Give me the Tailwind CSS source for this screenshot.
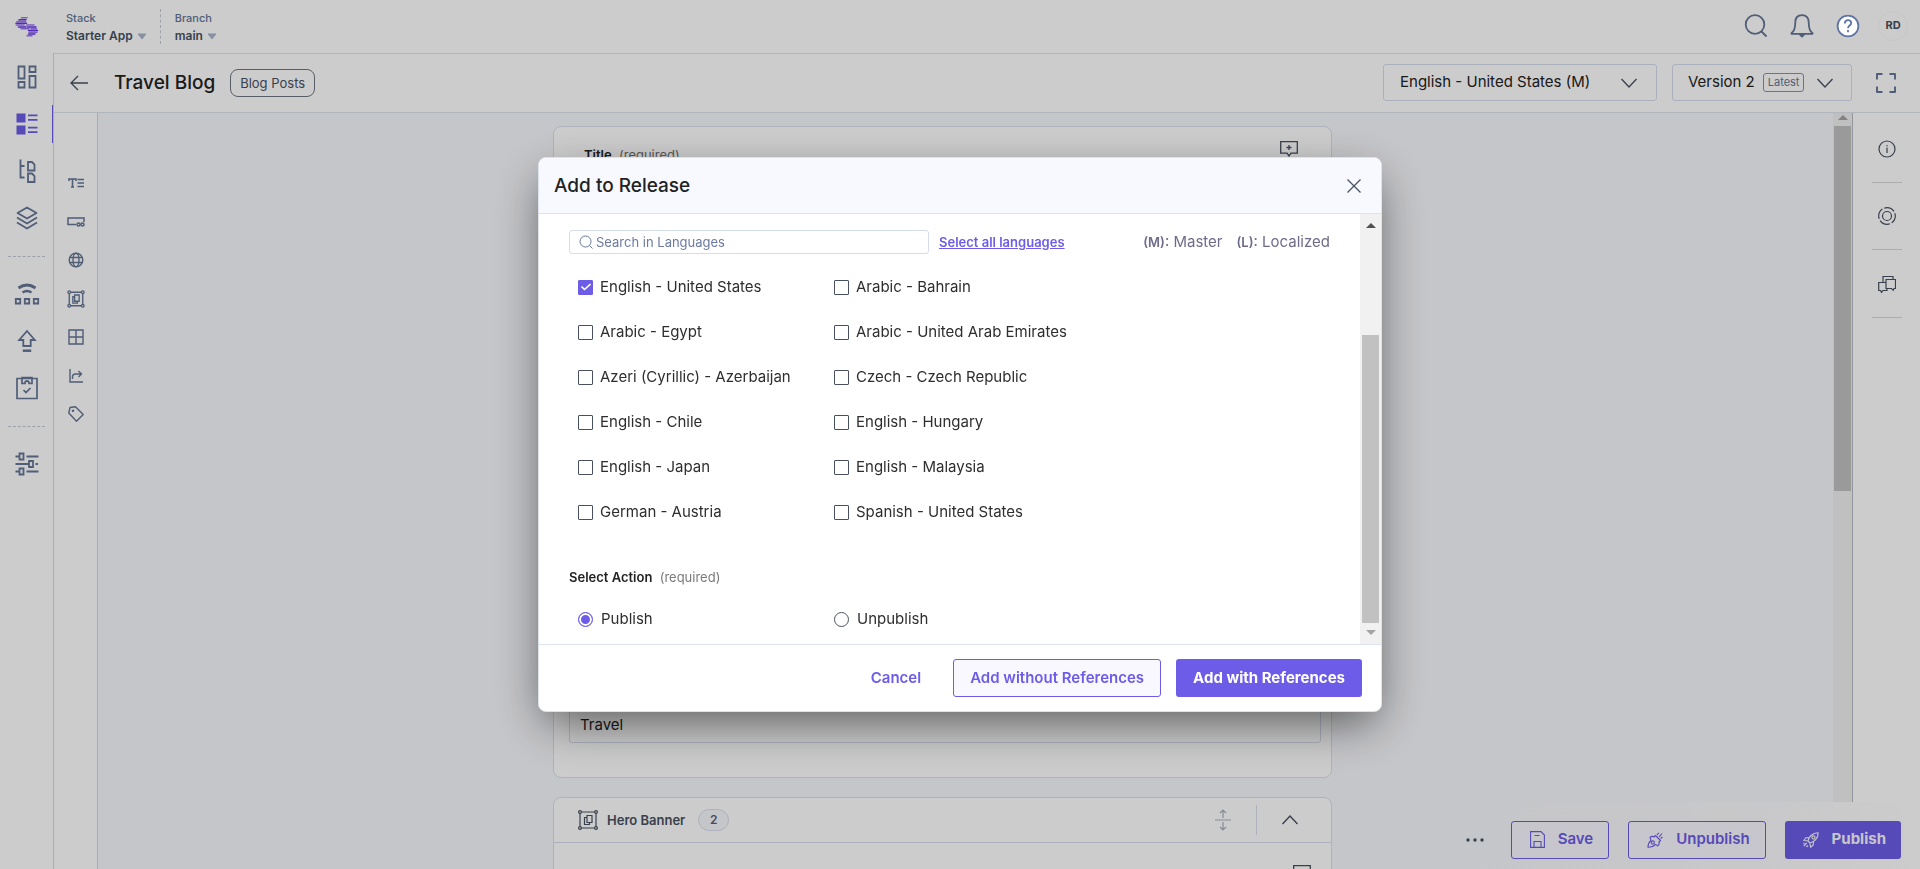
<!DOCTYPE html>
<html lang="en">
<head>
<meta charset="utf-8">
<title>Travel Blog</title>
<script src="https://cdn.jsdelivr.net/npm/@tailwindcss/browser@4"></script>
</head>
<body class="h-screen overflow-hidden bg-white font-['Inter',sans-serif] text-[#222222]">
<div class="flex h-full">

  <!-- Primary navigation -->
  <nav aria-label="Main" class="flex w-[53px] shrink-0 flex-col items-center text-[#647696]">
    <a href="#" aria-label="Home" class="flex h-[53px] w-full items-center justify-center">
      <svg width="24" height="20" viewBox="0 0 24 20" fill="none" stroke-width="1.500" stroke-linecap="round"><path stroke="#9a78f0" d="M6.500.8h5.500M2 4.500h8.500M1.200 8h8M11.500 8h7.500M6 11.700h8M16 11.700h5.500M14 15.300h8M12 18.800h5"/><path stroke="#6a35e8" d="M4 2.700h7M1 6.200h10.500M3.500 9.900h7.500M12.500 9.900h8.500M13.500 13.500h9M13.500 17h6.500"/></svg>
    </a>
    <ul class="flex w-full flex-col">
      <li><a href="#" aria-label="Dashboard" class="flex h-[47px] items-center justify-center"><svg width="22" height="24" viewBox="0 0 22 24" fill="none" stroke="currentColor" stroke-width="1.8"><path d="M2.500 1.500h6v12h-6zM13.500 1.500h6v5.500h-6zM2.500 17h6v5.500h-6zM13.500 11h6v11.500h-6z"/></svg></a></li>
      <li><a href="#" aria-label="Entries" aria-current="page" class="relative flex h-[47px] items-center justify-center text-[#6c5ce7]"><svg width="22" height="22" viewBox="0 0 22 22" fill="currentColor"><path d="M.5 0.500h9v9h-9zM.5 12.500h9v9h-9zM12 1.500h9.500v1.800H12zM12 6h9.500v1.800H12zM12 13.800h9.500v1.800H12zM12 18.200h9.500V20H12z"/></svg><span class="absolute right-0 h-[38px] w-px bg-[#6c5ce7]"></span></a></li>
      <li><a href="#" aria-label="Content models" class="flex h-[47px] items-center justify-center"><svg width="20" height="24" viewBox="0 0 20 24" fill="none" stroke="currentColor" stroke-width="1.800"><path d="M3.500 .5V18.500h4M3.500 7h4M11 3h4l2.500 2.500v6H11zM11 14.500h4l2.500 2.500v6H11z"/></svg></a></li>
      <li><a href="#" aria-label="Assets" class="flex h-[47px] items-center justify-center"><svg width="22" height="24" viewBox="0 0 22 24" fill="none" stroke="currentColor" stroke-width="1.800" stroke-linejoin="round"><path d="M11 1.500l9.500 5.500L11 12.500 1.500 7zM1 11.500l10 6 10-6M1 16.500l10 6 10-6"/></svg></a></li>
    </ul>
    <div class="mt-[15px] mb-[13px] w-[37px] border-t border-dashed border-[#c5cad6]"></div>
    <ul class="flex w-full flex-col">
      <li><a href="#" aria-label="Automations" class="flex h-[47px] items-center justify-center"><svg width="26" height="24" viewBox="0 0 26 24" fill="none" stroke="currentColor"><path stroke-width="3" d="M4.500 6q8.500-6 17 0"/><path stroke-width="2.500" d="M8.500 10.500q4.500-3 9 0"/><path stroke-width="1.800" d="M1.800 17h4.400v4.500H1.800zM10.800 17h4.400v4.500h-4.400zM19.800 17h4.400v4.500h-4.400z"/></svg></a></li>
      <li><a href="#" aria-label="Publish queue" class="flex h-[47px] items-center justify-center"><svg width="22" height="24" viewBox="0 0 22 24" fill="none" stroke="currentColor" stroke-width="1.800"><path d="M11 2L3.200 11H7.300v6h7.400v-6h4.100z"/><path stroke-width="2.500" d="M6.800 21.700h8.400"/></svg></a></li>
      <li><a href="#" aria-label="Releases" class="flex h-[47px] items-center justify-center"><svg width="22" height="24" viewBox="0 0 22 24" fill="none" stroke="currentColor" stroke-width="1.700"><path d="M1 2.500h20v20H1zM6 1.500v6h3V6q2-2 4 0v1.500h3v-6zM7.500 14l2.500 2.500 4.500-4.500"/></svg></a></li>
    </ul>
    <div class="my-[15px] w-[37px] border-t border-dashed border-[#c5cad6]"></div>
    <a href="#" aria-label="Settings" class="flex h-[44px] w-full items-center justify-center"><svg width="24" height="24" viewBox="0 0 24 24" fill="none" stroke="currentColor" stroke-width="1.800"><path d="M.5 4.500H4M4.500 1.500h4v6h-4zM11.500 4.500h12M.5 12h13M14 9h4v6h-4zM20.500 12h2.500M.5 19.500H4M4.500 16.500h4v6h-4zM11.500 19.500h12"/></svg></a>
  </nav>

  <div class="flex min-w-0 grow flex-col">
    <!-- Top bar -->
    <header class="flex h-[53px] shrink-0 items-center pr-3 pl-[13px]">
      <div class="pt-[2px]">
        <div class="text-[11px] leading-4 font-medium text-[#647696]">Stack</div>
        <button class="flex items-center gap-[5px] text-[12px] leading-5 font-semibold text-[#475161]">Starter App <svg width="8" height="6" viewBox="0 0 8 6" fill="#a9b6cb"><path d="M0 .5h8v1L4.500 6h-1L0 1.500z"/></svg></button>
      </div>
      <div class="mx-[14px] h-[35px] border-l border-dashed border-[#c5cad6]"></div>
      <div class="pt-[2px]">
        <div class="text-[11px] leading-4 font-medium text-[#647696]">Branch</div>
        <button class="flex items-center gap-[5px] text-[12px] leading-5 font-semibold text-[#475161]">main <svg width="8" height="6" viewBox="0 0 8 6" fill="#a9b6cb"><path d="M0 .5h8v1L4.500 6h-1L0 1.500z"/></svg></button>
      </div>
      <div class="ml-auto flex items-center gap-[22px] pb-[2px] text-[#647696]">
        <button aria-label="Search"><svg width="24" height="24" viewBox="0 0 24 24" fill="none" stroke="currentColor" stroke-width="1.800"><circle cx="11" cy="10.500" r="9.300"/><path d="M17.500 17.500l5 5"/></svg></button>
        <button aria-label="Notifications"><svg width="24" height="24" viewBox="0 0 24 24" fill="none" stroke="currentColor" stroke-width="1.800" stroke-linejoin="round"><path d="M12 1.200c-4.500 0-6.700 3-6.700 7 0 6-1 9-3.800 10.800v.8h21V19c-2.800-1.800-3.800-4.800-3.800-10.800 0-4-2.200-7-6.700-7z"/><path fill="currentColor" d="M10 20.500h4l-2 2z"/></svg></button>
        <button aria-label="Help" class="relative z-50"><svg width="24" height="24" viewBox="0 0 24 24" fill="none" stroke="#5e75a5" stroke-width="1.800"><circle cx="12" cy="12" r="10.400" fill="#fff"/><path d="M8.800 9.500c0-4.400 6.400-4.400 6.400-.5 0 2.500-3.200 2.600-3.200 5.200M12 16v2.200"/></svg></button>
        <button class="-ml-1 flex size-[30px] items-center justify-center rounded-full border border-[#f9f9f9] text-[11px] font-bold text-[#475161]">RD</button>
      </div>
    </header>

    <div class="flex min-h-0 grow flex-col border-l border-[#d5d7e3]">
      <!-- Entry header -->
      <div class="flex h-[60px] shrink-0 items-center border-y border-[#dfe4ed] pr-6 pb-px pl-4">
        <button aria-label="Back"><svg width="18" height="16" viewBox="0 0 18 16" fill="none" stroke="#475161" stroke-width="1.300"><path d="M18 8H1M8 1L1 8l7 7"/></svg></button>
        <h1 class="ml-[26px] text-[19px] leading-7 font-medium">Travel Blog</h1>
        <span class="ml-[15px] rounded-lg border border-[#707783] px-[9px] py-[3px] text-[13px] leading-5 text-[#475161]">Blog Posts</span>
        <button class="ml-auto flex h-[37px] w-[274px] items-center justify-between rounded-[3px] border border-[#d5dcec] px-4 text-[15px]">English - United States (M)
          <svg class="mr-[3px]" width="16" height="10" viewBox="0 0 16 10" fill="none" stroke="#475161" stroke-width="1.300"><path d="M.5 1L8 9l7.500-8"/></svg></button>
        <button class="ml-[15px] flex h-[37px] w-[180px] items-center rounded-[3px] border border-[#d5dcec] px-[15px] text-[15px]">Version 2
          <span class="ml-2 rounded-[3px] border border-[#7f93b8] px-1 text-[11px] leading-[17px] text-[#647696]">Latest</span>
          <svg class="mr-[3px] ml-auto" width="16" height="10" viewBox="0 0 16 10" fill="none" stroke="#475161" stroke-width="1.300"><path d="M.5 1L8 9l7.500-8"/></svg></button>
        <button aria-label="Expand" class="ml-6"><svg width="20" height="20" viewBox="0 0 20 20" fill="none" stroke="#647696" stroke-width="1.900" stroke-linejoin="round"><path d="M1 6.500V1h5.500M13.500 1H19v5.500M19 13.500V19h-5.500M6.500 19H1v-5.500"/></svg></button>
      </div>

      <div class="flex min-h-0 grow">
        <!-- Field type rail -->
        <div class="w-[44px] shrink-0 border-r border-[#d5d7e3] pt-[60px]">
        <ul class="flex h-[251px] flex-col items-center justify-between text-[#647696]">
          <li class="flex h-5 items-center"><svg width="16" height="10" viewBox="0 0 16 10" fill="none" stroke="currentColor" stroke-width="1.600"><path d="M1 3V1h7v2M4.500 1v8M3 9h3M9.500 1.500H16M9.500 5H16M9.500 8.500H16"/></svg></li>
          <li class="flex h-5 items-center"><svg width="18" height="10" viewBox="0 0 18 10" fill="none" stroke="currentColor" stroke-width="1.500"><path d="M9 7.500H1V1h16v4"/><circle cx="11.500" cy="7.500" r="1.500"/><circle cx="15.500" cy="7.500" r="1.500"/></svg></li>
          <li class="flex h-5 items-center"><svg width="16" height="16" viewBox="0 0 16 16" fill="none" stroke="currentColor" stroke-width="1.400"><circle cx="8" cy="8" r="6.800"/><ellipse cx="8" cy="8" rx="3" ry="6.800"/><path d="M1.800 5.500h12.400M1.800 10.500h12.400"/></svg></li>
          <li class="flex h-5 items-center"><svg width="18" height="18" viewBox="0 0 20 20" fill="none" stroke="currentColor" stroke-width="1.500"><path d="M4 2.500h12M4 17.500h12M2.500 4v12M17.500 4v12M8.500 5.500h5v7h-5zM8.500 7.500h-2v7h5v-2"/><circle cx="2.500" cy="2.500" r="1.500"/><circle cx="17.500" cy="2.500" r="1.500"/><circle cx="2.500" cy="17.500" r="1.500"/><circle cx="17.500" cy="17.500" r="1.500"/></svg></li>
          <li class="flex h-5 items-center"><svg width="16" height="16" viewBox="0 0 16 16" fill="none" stroke="currentColor" stroke-width="1.400"><path d="M1 1h14v14H1zM8 1v14M1 8h14"/></svg></li>
          <li class="flex h-5 items-center"><svg width="14" height="14" viewBox="0 0 14 14" fill="none" stroke="currentColor" stroke-width="1.400"><path d="M1 0v13h13M3.500 10V8q0-3 3-3H12M9.500 2L12.500 5l-3 3"/></svg></li>
          <li class="flex h-5 items-center"><svg width="16" height="16" viewBox="0 0 16 16" fill="none" stroke="currentColor" stroke-width="1.400" stroke-linejoin="round"><path d="M.8 7L2 1.500 7.500.8l7.700 7.700-6.700 6.700z"/><circle cx="5" cy="4.800" r=".6"/></svg></li>
        </ul>
        </div>

        <!-- Form canvas -->
        <main class="flex min-w-0 grow justify-center overflow-hidden bg-[#f7f8fc] pr-[46px]">
          <div class="flex w-full max-w-[779px] flex-col gap-[19px] pt-[13px]">
            <section class="flex h-[652px] shrink-0 flex-col rounded-lg border border-[#d9dfeb] bg-white">
              <div class="flex items-start justify-between px-[30px] pt-[14px]">
                <label for="title" class="pt-1 text-[13px] leading-5 font-semibold">Title <span class="ml-1 font-normal text-[#6f6f6f]">(required)</span></label>
                <svg class="mr-[3px]" width="18" height="16" viewBox="0 0 18 16" fill="none" stroke="#475161" stroke-width="1.300"><path d="M.7.700h16.600v11.500H11L9 15l-2-2.800H.700zM9 4v5M6.500 6.500h5"/></svg>
              </div>
              <input id="title" value="Travel" class="mt-auto mr-[10px] mb-[34px] ml-[15px] h-[38px] rounded-[3px] border border-[#d5dcec] px-[10px] text-[15px] outline-none">
            </section>
            <section class="shrink-0 rounded-lg border border-[#d9dfeb] bg-white">
              <div class="flex h-[45px] items-center border-b border-[#d9dfeb] pr-[33px] pl-6 text-[#475161]">
                <svg width="20" height="20" viewBox="0 0 20 20" fill="none" stroke="currentColor" stroke-width="1.200"><path d="M3.500 2h13M3.500 18h13M2 3.500v13M18 3.500v13M9 5.500h5v7H9zM9 7.500H6.500v7h5v-2"/><circle cx="2" cy="2" r="1.400"/><circle cx="18" cy="2" r="1.400"/><circle cx="2" cy="18" r="1.400"/><circle cx="18" cy="18" r="1.400"/></svg>
                <h2 class="ml-[9px] text-[13px] leading-5 font-semibold">Hero Banner</h2>
                <span class="ml-[13px] flex h-[22px] w-[31px] items-center justify-center rounded-full border border-[#d9dfeb] bg-[#f7f8fc] text-[12px] font-semibold text-[#5d5a78]">2</span>
                <svg class="ml-auto" width="16" height="22" viewBox="0 0 16 22" fill="none" stroke="#a9b0bd" stroke-width="1.200"><path d="M0 11h16M8 9V1M5 4l3-3 3 3M8 13v8M5 18l3 3 3-3"/></svg>
                <div class="ml-[25px] h-[30px] border-l border-[#d9dfeb]"></div>
                <button aria-label="Collapse" class="ml-[25px]"><svg width="16" height="10" viewBox="0 0 16 10" fill="none" stroke="currentColor" stroke-width="1.400"><path d="M.5 9L8 1l7.500 8"/></svg></button>
              </div>
              <div class="flex h-20 justify-end pt-[22px] pr-5"><svg width="18" height="16" viewBox="0 0 18 16" fill="none" stroke="#475161" stroke-width="1.300"><path d="M.7.700h16.600v11.500H11L9 15l-2-2.800H.700zM9 4v5M6.500 6.500h5"/></svg></div>
            </section>
          </div>
        </main>

        <!-- Canvas scroll bar -->
        <div class="flex w-5 shrink-0 flex-col items-center border-r border-[#b8bcc4] bg-[#f1f1f1]">
          <svg class="mt-[2px]" width="10" height="6" viewBox="0 0 10 6" fill="#a3a3a3"><path d="M5 0l5 5H0z"/></svg>
          <div class="mt-[5px] h-[365px] w-[17px] bg-[#c1c1c1]"></div>
        </div>

        <!-- Entry tools -->
        <aside class="flex w-[67px] shrink-0 flex-col items-center text-[#475161]">
          <button aria-label="Information" class="flex h-[70px] w-[30px] items-center justify-center border-b border-[#d5d7dd] pt-[3px]"><svg width="18" height="18" viewBox="0 0 18 18" fill="none" stroke="currentColor" stroke-width="1.200"><circle cx="9" cy="9" r="8"/><path d="M9 7.500V13M9 5v1.200"/></svg></button>
          <button aria-label="Live preview" class="flex h-[67px] w-[30px] items-center justify-center border-b border-[#d5d7dd]"><svg width="18" height="18" viewBox="0 0 18 18" fill="none" stroke="currentColor" stroke-width="1.200"><circle cx="9" cy="9" r="8.300" stroke-dasharray="11 2" stroke-dashoffset="3"/><circle cx="9" cy="9" r="4.500"/></svg></button>
          <button aria-label="Discussion" class="flex h-[68px] w-[30px] items-center justify-center border-b border-[#d5d7dd]"><svg width="18" height="18" viewBox="0 0 18 18" fill="none" stroke="currentColor" stroke-width="1.200"><path d="M5 7V1.500h10V4M8 4.500h9.500v9H16l-.8 1.800-1.700-1.800H8zM8 7.500H.7v8h2l.8 2 1.500-2h4V14"/></svg></button>
        </aside>
      </div>
    </div>
  </div>
</div>

<!-- Entry actions, floating over the canvas -->
<div class="fixed right-0 bottom-0 z-10 flex h-[67px] w-[500px] items-center justify-end gap-[19px] bg-linear-to-r from-[#f7f8fc] via-[#f9f9fc] to-white pt-2 pr-[19px] text-[15px] font-semibold text-[#6c5ce7]">
  <button aria-label="More actions"><svg width="18" height="4" viewBox="0 0 18 4" fill="#475161"><circle cx="2" cy="2" r="1.700"/><circle cx="9" cy="2" r="1.700"/><circle cx="16" cy="2" r="1.700"/></svg></button>
  <button class="ml-2 flex h-[38px] items-center gap-[10px] rounded-[3px] border border-[#6c5ce7] bg-[#f9f8ff] px-[15px]"><svg class="mx-[3px]" width="15" height="17" viewBox="0 0 15 17" fill="none" stroke="currentColor" stroke-width="1.100"><path d="M.6.600h10.400l3.400 3.400v12.400H.600zM4 16v-5.500h7V16M4.500 4.500h5"/></svg>Save</button>
  <button class="flex h-[38px] items-center gap-[10px] rounded-[3px] border border-[#6c5ce7] bg-[#f9f8ff] px-[15px]">
    <svg class="mx-[3px]" width="16" height="16" viewBox="0 0 16 16" fill="none" stroke="currentColor" stroke-width="1.100" stroke-linejoin="round"><path d="M3 5.500Q5 3.500 7 5L8.500 3.500l5 5L12 10q1 2-1.500 4-1-1.500-2-1.500-3 3-7.500 2.800Q1 11 3.800 8.500 4 7 3 5.500z"/><circle cx="5.800" cy="10.500" r="1.600"/><path d="M10 3l1.800-2.200M12 5l3-3.500M13.500 6.500l2-1.500"/></svg>Unpublish</button>
  <button class="flex h-[38px] items-center gap-[10px] rounded-[3px] bg-[#6c5ce7] px-[15px] font-bold text-[#f9f8ff]">
    <svg class="mx-[3px]" width="16" height="16" viewBox="0 0 16 16" fill="none" stroke="currentColor" stroke-width="1.100" stroke-linejoin="round"><path d="M5 9c.5-4 4-8 10.200-8.200C15.400 6 11 10.500 7 11zM6.300 5.500L3 5.700.8 8.500l4.200.5M10.500 9.500L10.200 13 7.500 15.200 7 11M3.800 11l-3 3M1.500 11l-1 1M5 13.500l-1.500 1.500"/><circle cx="10.500" cy="5.500" r="1.600"/></svg>Publish</button>
</div>

<!-- Modal -->
<div class="fixed inset-0 z-40 flex items-start justify-center bg-black/20 pt-[157px]">
  <div role="dialog" aria-modal="true" aria-labelledby="dialog-title" class="flex w-[844px] flex-col overflow-hidden rounded-lg border border-[#dde3ee] bg-white shadow-[0_16px_48px_-6px_rgba(0,0,0,0.56)]">
    <header class="flex h-[56px] items-center justify-between border-b border-[#dde3ee] bg-[#f7f9ff] pr-5 pl-[15px]">
      <h2 id="dialog-title" class="text-[19px] leading-7 font-medium">Add to Release</h2>
      <button aria-label="Close"><svg width="14" height="14" viewBox="0 0 14 14" fill="none" stroke="#475161" stroke-width="1.300"><path d="M.5.500l13 13M13.500.500l-13 13"/></svg></button>
    </header>
    <div class="flex h-[430px]">
      <div class="min-w-0 grow px-[30px] pt-4">
        <div class="flex items-center">
          <label class="flex h-6 w-[360px] items-center gap-[3px] rounded-[3px] border border-[#d5dcec] px-[9px]">
            <svg class="shrink-0" width="14" height="14" viewBox="0 0 14 14" fill="none" stroke="#647696" stroke-width="1"><circle cx="6.500" cy="6.500" r="5.500"/><path d="M10.500 10.500l3 3"/></svg>
            <input type="text" aria-label="Search in Languages" placeholder="Search in Languages" class="w-full text-[13px] leading-5 outline-none placeholder:text-[#6b7ba5]">
          </label>
          <a href="#" class="ml-[10px] text-[13px] leading-5 font-semibold text-[#6c5ce7] underline">Select all languages</a>
          <p class="ml-auto flex gap-[14px] text-[15px] leading-5 text-[#6f6b8a]"><span><b class="text-[13px] font-semibold">(M)</b>: Master</span><span><b class="text-[13px] font-semibold">(L)</b>: Localized</span></p>
        </div>
        <div class="mt-[21px] ml-[9px] grid grid-cols-[256px_1fr] gap-y-[21px] text-[15px] leading-6 text-[#2e2e2e]">
          <label class="flex items-center gap-[7px]"><input type="checkbox" checked class="peer sr-only"><span class="flex size-[15px] items-center justify-center rounded-[1px] border border-[#475161] text-transparent peer-checked:border-[#6c5ce7] peer-checked:bg-[#6c5ce7] peer-checked:text-white"><svg width="10" height="8" viewBox="0 0 10 8" fill="none" stroke="currentColor" stroke-width="1.600"><path d="M.5 3.500l3 3L9.500 1"/></svg></span>English - United States</label>
          <label class="flex items-center gap-[7px]"><input type="checkbox" class="size-[15px] appearance-none rounded-[1px] border border-[#475161]">Arabic - Bahrain</label>
          <label class="flex items-center gap-[7px]"><input type="checkbox" class="size-[15px] appearance-none rounded-[1px] border border-[#475161]">Arabic - Egypt</label>
          <label class="flex items-center gap-[7px]"><input type="checkbox" class="size-[15px] appearance-none rounded-[1px] border border-[#475161]">Arabic - United Arab Emirates</label>
          <label class="flex items-center gap-[7px]"><input type="checkbox" class="size-[15px] appearance-none rounded-[1px] border border-[#475161]">Azeri (Cyrillic) - Azerbaijan</label>
          <label class="flex items-center gap-[7px]"><input type="checkbox" class="size-[15px] appearance-none rounded-[1px] border border-[#475161]">Czech - Czech Republic</label>
          <label class="flex items-center gap-[7px]"><input type="checkbox" class="size-[15px] appearance-none rounded-[1px] border border-[#475161]">English - Chile</label>
          <label class="flex items-center gap-[7px]"><input type="checkbox" class="size-[15px] appearance-none rounded-[1px] border border-[#475161]">English - Hungary</label>
          <label class="flex items-center gap-[7px]"><input type="checkbox" class="size-[15px] appearance-none rounded-[1px] border border-[#475161]">English - Japan</label>
          <label class="flex items-center gap-[7px]"><input type="checkbox" class="size-[15px] appearance-none rounded-[1px] border border-[#475161]">English - Malaysia</label>
          <label class="flex items-center gap-[7px]"><input type="checkbox" class="size-[15px] appearance-none rounded-[1px] border border-[#475161]">German - Austria</label>
          <label class="flex items-center gap-[7px]"><input type="checkbox" class="size-[15px] appearance-none rounded-[1px] border border-[#475161]">Spanish - United States</label>
        </div>
        <fieldset>
          <legend class="pt-[43px] text-[13px] leading-5 font-semibold">Select Action <span class="ml-1 font-normal text-[#7a7a7a]">(required)</span></legend>
          <div class="mt-5 ml-[9px] grid grid-cols-[256px_1fr] text-[15px] leading-6 text-[#2e2e2e]">
            <label class="flex items-center gap-2"><input type="radio" name="action" checked class="size-[15px] appearance-none rounded-full border border-[#475161] checked:border-[#6c5ce7] checked:bg-[#6c5ce7] checked:shadow-[inset_0_0_0_2px_#fff]">Publish</label>
            <label class="flex items-center gap-2"><input type="radio" name="action" class="size-[15px] appearance-none rounded-full border border-[#475161]">Unpublish</label>
          </div>
        </fieldset>
      </div>
      <div class="flex w-[21px] shrink-0 flex-col items-center bg-[#f1f1f1]">
        <svg class="mt-[9px]" width="10" height="6" viewBox="0 0 10 6" fill="#505050"><path d="M5 0l5 5H0z"/></svg>
        <div class="mt-auto h-[288px] w-[17px] bg-[#c1c1c1]"></div>
        <svg class="mt-[7px] mb-[8px]" width="10" height="6" viewBox="0 0 10 6" fill="#a3a3a3"><path d="M5 5L0 0h10z"/></svg>
      </div>
    </div>
    <footer class="flex h-[67px] items-center justify-end gap-[15px] border-t border-[#dde3ee] pr-[19px] text-[15px] font-semibold text-[#6c5ce7]">
      <button class="h-[38px] px-[17px]">Cancel</button>
      <button class="h-[38px] rounded-[3px] border border-[#6c5ce7] bg-[#f9f8ff] px-4">Add without References</button>
      <button class="h-[38px] rounded-[3px] bg-[#6c5ce7] px-[17px] font-bold text-white">Add with References</button>
    </footer>
  </div>
</div>
</body>
</html>
